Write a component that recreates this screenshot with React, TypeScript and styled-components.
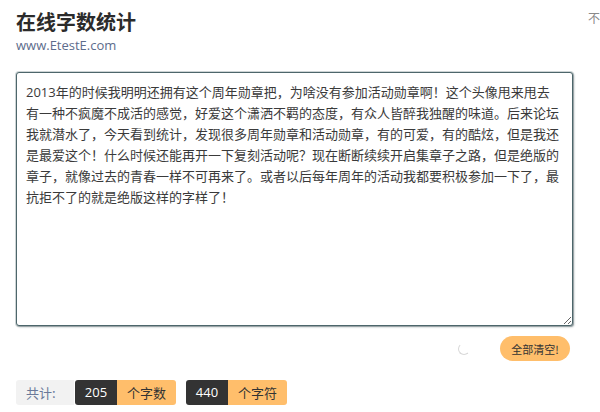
import styled, { createGlobalStyle } from 'styled-components';

const sample =
	'2013年的时候我明明还拥有这个周年勋章把，为啥没有参加活动勋章啊！这个头像甩来甩去有一种不疯魔不成活的感觉，好爱这个潇洒不羁的态度，有众人皆醉我独醒的味道。后来论坛我就潜水了，今天看到统计，发现很多周年勋章和活动勋章，有的可爱，有的酷炫，但是我还是最爱这个！什么时候还能再开一下复刻活动呢？现在断断续续开启集章子之路，但是绝版的章子，就像过去的青春一样不可再来了。或者以后每年周年的活动我都要积极参加一下了，最抗拒不了的就是绝版这样的字样了！';

const totals = [
	{ value: 205, unit: '个字数' },
	{ value: 440, unit: '个字符' },
];

const App = () => {
	return (
		<Page>
			<GlobalStyle />
			<Corner>不</Corner>
			<Header>
				<Title>在线字数统计</Title>
				<Site>www.EtestE.com</Site>
			</Header>
			<Editor defaultValue={sample} spellCheck={false} />
			<Actions>
				<Spinner />
				<ClearButton>全部清空!</ClearButton>
			</Actions>
			<Stats>
				<Label>共计:</Label>
				{totals.map((t) => (
					<Group key={t.unit}>
						<Count>{t.value}</Count>
						<Unit>{t.unit}</Unit>
					</Group>
				))}
			</Stats>
		</Page>
	);
};

export default App;

const GlobalStyle = createGlobalStyle`
	html, body {
		margin: 0;
		padding: 0;
		background: #fff;
	}
	body {
		font-family: "Open Sans", "Noto Sans CJK SC", sans-serif;
		color: #333;
	}
`;

const Page = styled.div`
	position: relative;
	width: 600px;
	height: 412px;
	overflow: hidden;
	padding: 0 16px;
	box-sizing: border-box;
`;

const Corner = styled.div`
	position: absolute;
	top: 9px;
	right: 0;
	font-size: 12px;
	color: #8a8a8a;
	font-family: "Noto Sans CJK SC", sans-serif;
`;

const Header = styled.div`
	padding-top: 9px;
	height: 63px;
	box-sizing: border-box;
`;

const Title = styled.h1`
	margin: 0;
	font-size: 20px;
	line-height: 26px;
	font-weight: 700;
	color: #2b2b2b;
	font-family: "Noto Sans CJK SC", sans-serif;
`;

const Site = styled.div`
	margin-top: 2px;
	font-size: 13px;
	line-height: 16px;
	color: #5d6c8c;
`;

const Editor = styled.textarea`
	display: block;
	margin-top: 9px;
	width: 557px;
	height: 254px;
	box-sizing: border-box;
	padding: 9px 12px 9px 9px;
	border: 1px solid #4d666b;
	border-radius: 3px;
	box-shadow: 1px 1px 2px rgba(40, 60, 65, 0.45), 0 0 0 1px rgba(77, 102, 107, 0.25);
	font-family: "Open Sans", "Noto Sans CJK SC", sans-serif;
	font-size: 13px;
	line-height: 21px;
	color: #3a3a3a;
	resize: both;
	outline: none;
`;

const Actions = styled.div`
	display: flex;
	align-items: center;
	justify-content: flex-end;
	gap: 30px;
	margin-top: 10px;
	width: 554px;
`;

const Spinner = styled.div`
	width: 10px;
	height: 10px;
	border-radius: 50%;
	border: 1.5px solid transparent;
	border-left-color: #d8d8d8;
	border-bottom-color: #d8d8d8;
	margin-top: 1px;
`;

const ClearButton = styled.button`
	width: 70px;
	height: 25px;
	border: none;
	border-radius: 13px;
	background: #ffbe6b;
	color: #333;
	font-family: "Noto Sans CJK SC", sans-serif;
	font-size: 11px;
	cursor: pointer;
	padding: 0;
`;

const Stats = styled.div`
	display: flex;
	align-items: center;
	gap: 10px;
	margin-top: 19px;
	height: 25px;
`;

const Label = styled.div`
	width: 58px;
	height: 25px;
	line-height: 25px;
	padding-left: 10px;
	box-sizing: border-box;
	background: #f2f2f2;
	border-radius: 3px 0 0 3px;
	color: #6a7899;
	font-size: 13px;
	margin-right: -9px;
	font-family: "Noto Sans CJK SC", sans-serif;
`;

const Group = styled.div`
	display: flex;
	height: 25px;
	border-radius: 3px;
	overflow: hidden;
`;

const Count = styled.div`
	width: 42px;
	line-height: 25px;
	text-align: center;
	background: #333;
	color: #fff;
	font-size: 13px;
`;

const Unit = styled.div`
	width: 59px;
	line-height: 25px;
	text-align: center;
	background: #ffbe6b;
	color: #333;
	font-size: 13px;
	font-family: "Noto Sans CJK SC", sans-serif;
`;
